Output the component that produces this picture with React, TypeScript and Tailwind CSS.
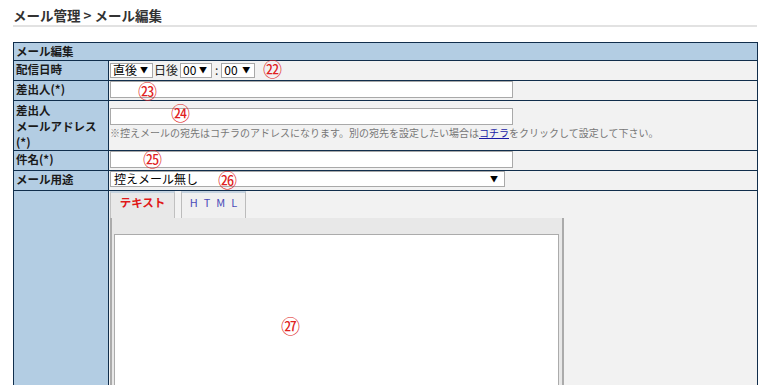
import React from "react";

const font = { fontFamily: '"Noto Sans CJK JP", "Noto Sans", sans-serif' };

function Circ({ n, className }: { n: string; className: string }) {
  return (
    <span className={`absolute text-[19px] leading-[17px] text-[#e02020] ${className}`}>{n}</span>
  );
}

function Sel({ label, w }: { label: string; w: string }) {
  return (
    <span className={`inline-flex items-center justify-between h-[15px] ${w} border border-[#a9a9a9] bg-white pl-[2px] pr-[4px] text-[12px] leading-none text-black`}>
      <span>{label}</span>
      <span className="text-[8px]">▼</span>
    </span>
  );
}

export default function App() {
  const lab = "border border-[#112e4c] bg-[#b3cde3] align-top px-[2px] text-[11.5px] font-bold leading-[16px] text-[#1a1a1a]";
  const val = "border border-[#112e4c] bg-[#f2f2f2] align-top p-0";
  return (
    <div className="w-[774px] h-[385px] overflow-hidden bg-white relative" style={font}>
      <div className="pl-[13px] pt-[6px] pr-[17px]">
        <div className="text-[13.5px] font-bold text-[#333] leading-[19px]">メール管理 &gt; メール編集</div>
        <div className="h-[2px] bg-[#e2e2e2] mt-[0px]" />
        <table className="mt-[15px] w-[745px] border-collapse">
          <tbody>
            <tr className="h-[18px]">
              <td colSpan={2} className={lab + " align-middle"}>メール編集</td>
            </tr>
            <tr className="h-[20px]">
              <td className={lab + " w-[95px] align-middle"}>配信日時</td>
              <td className={val + " align-middle"}>
                <div className="relative flex items-center pl-[1px] text-[12px] text-[#222]">
                  <Sel label="直後" w="w-[43px]" />
                  <span className="ml-[1px] mr-[2px]">日後</span>
                  <Sel label="00" w="w-[32px]" />
                  <span className="mx-[3px]">:</span>
                  <Sel label="00" w="w-[34px]" />
                  <Circ n="㉒" className="left-[154px] top-[-1px]" />
                </div>
              </td>
            </tr>
            <tr className="h-[20px]">
              <td className={lab + " align-middle"}>差出人(*)</td>
              <td className={val + " align-middle"}>
                <div className="relative pl-[1px]">
                  <div className="h-[17px] w-[403px] border border-[#a9a9a9] bg-white" />
                  <Circ n="㉓" className="left-[29px] top-[1px]" />
                </div>
              </td>
            </tr>
            <tr className="h-[48px]">
              <td className={lab + " pt-[1px]"}>
                差出人
                <br />
                メールアドレス
                <br />
                (*)
              </td>
              <td className={val}>
                <div className="relative pl-[1px] pt-[7px]">
                  <div className="h-[17px] w-[403px] border border-[#a9a9a9] bg-white" />
                  <div className="mt-[1px] text-[10px] leading-[14px] text-[#777]">
                    ※控えメールの宛先はコチラのアドレスになります。別の宛先を設定したい場合は
                    <span className="text-[#1a1aa6] underline">コチラ</span>
                    をクリックして設定して下さい。
                  </div>
                  <Circ n="㉔" className="left-[62px] top-[3px]" />
                </div>
              </td>
            </tr>
            <tr className="h-[20px]">
              <td className={lab + " align-middle"}>件名(*)</td>
              <td className={val + " align-middle"}>
                <div className="relative pl-[1px]">
                  <div className="h-[17px] w-[403px] border border-[#a9a9a9] bg-white" />
                  <Circ n="㉕" className="left-[34px] top-[-1px]" />
                </div>
              </td>
            </tr>
            <tr className="h-[20px]">
              <td className={lab + " align-middle"}>メール用途</td>
              <td className={val + " align-middle"}>
                <div className="relative pl-[1px]">
                  <div className="h-[16px] w-[395px] border border-[#a9a9a9] bg-white flex items-center justify-between pl-[3px] pr-[6px] text-[12px] leading-none text-black">
                    <span>控えメール無し</span>
                    <span className="text-[8px]">▼</span>
                  </div>
                  <Circ n="㉖" className="left-[109px] top-[0px]" />
                </div>
              </td>
            </tr>
            <tr className="h-[250px]">
              <td className={lab}></td>
              <td className={val}>
                <div className="pl-[1px]">
                  <div className="flex gap-[6px] h-[27px]">
                    <div className="w-[65px] h-[27px] bg-[#e8e8e8] border-t-2 border-t-[#c5d3e0] border-x border-x-[#c0c0c0] text-[11.5px] font-bold text-[#e01818] text-center leading-[18px]">
                      テキスト
                    </div>
                    <div className="w-[65px] h-[27px] bg-[#f0f0f0] border-t-2 border-t-[#c5d3e0] border-x border-x-[#bcbcbc] text-[11px] text-[#4a4ab8] text-center leading-[18px] tracking-[6px] pl-[6px]">
                      HTML
                    </div>
                  </div>
                  <div className="w-[454px] h-[200px] bg-[#e8e8e8] border-x-2 border-x-[#ababab] pt-[16px] pl-[2px]">
                    <div className="relative w-[445px] h-[190px] bg-white border border-[#ababab]">
                      <Circ n="㉗" className="left-[166px] top-[82px]" />
                    </div>
                  </div>
                </div>
              </td>
            </tr>
          </tbody>
        </table>
      </div>
    </div>
  );
}
